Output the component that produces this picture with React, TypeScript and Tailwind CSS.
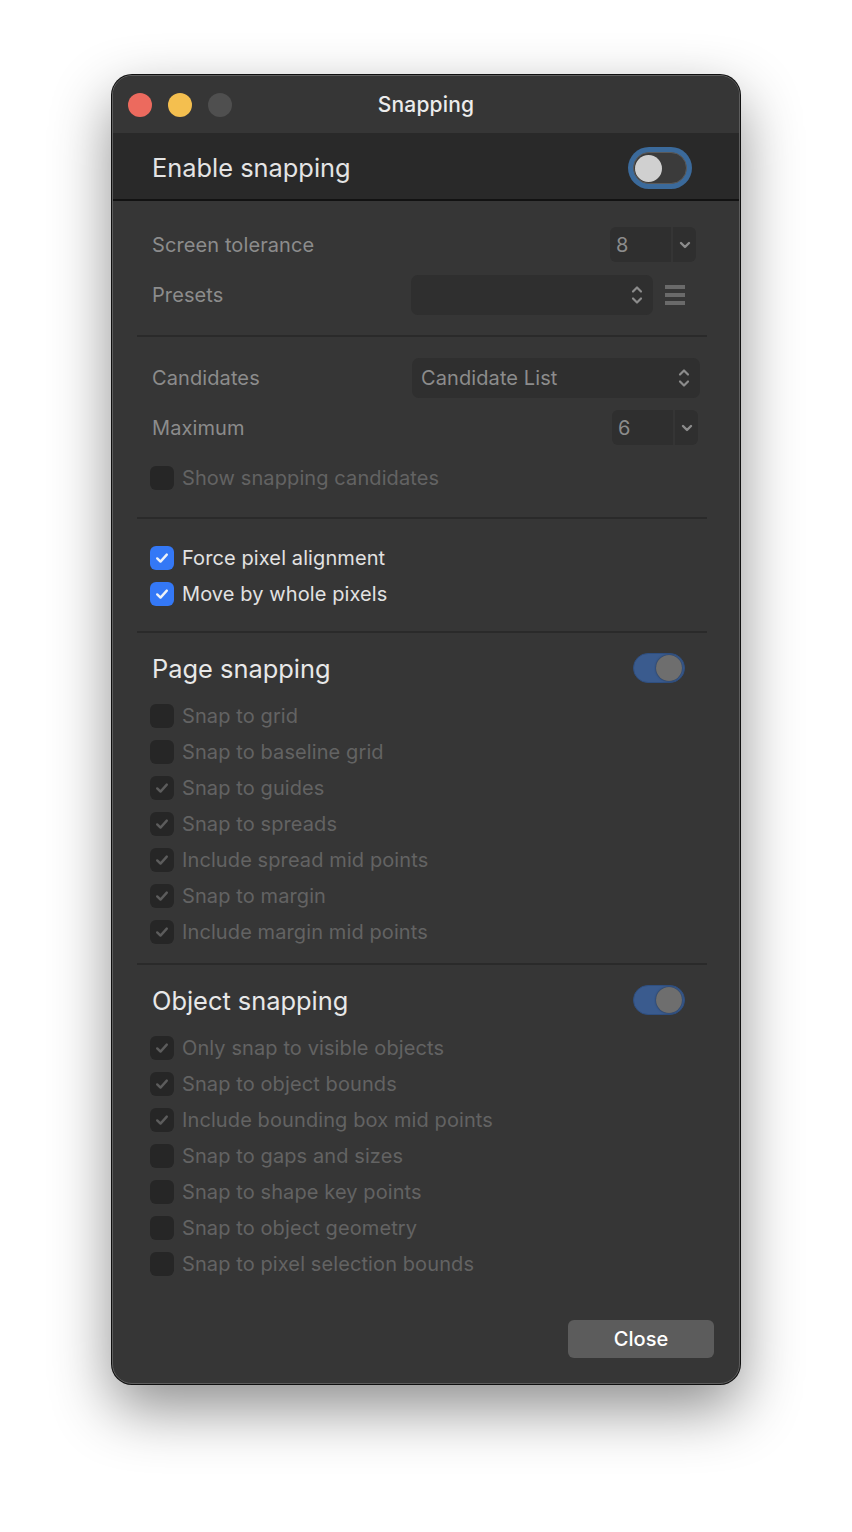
import type { ReactNode } from "react";

const pageRows = [
  { label: "Snap to grid", checked: false },
  { label: "Snap to baseline grid", checked: false },
  { label: "Snap to guides", checked: true },
  { label: "Snap to spreads", checked: true },
  { label: "Include spread mid points", checked: true },
  { label: "Snap to margin", checked: true },
  { label: "Include margin mid points", checked: true },
];

const objectRows = [
  { label: "Only snap to visible objects", checked: true },
  { label: "Snap to object bounds", checked: true },
  { label: "Include bounding box mid points", checked: true },
  { label: "Snap to gaps and sizes", checked: false },
  { label: "Snap to shape key points", checked: false },
  { label: "Snap to object geometry", checked: false },
  { label: "Snap to pixel selection bounds", checked: false },
];

function Check({ color }: { color: string }) {
  return (
    <svg width="16" height="16" viewBox="0 0 16 16" fill="none">
      <path
        d="M3.2 8.4 L6.5 11.6 L12.8 4.6"
        stroke={color}
        strokeWidth="2.4"
        strokeLinecap="round"
        strokeLinejoin="round"
      />
    </svg>
  );
}

function CheckRow({
  label,
  checked,
  active = false,
}: {
  label: string;
  checked: boolean;
  active?: boolean;
}) {
  return (
    <div className="flex h-[36px] items-center gap-[8px] pl-[13px] pt-[2px]">
      <div
        className={
          active
            ? "flex h-[24px] w-[24px] items-center justify-center rounded-[6px] bg-[#3478f6]"
            : "flex h-[24px] w-[24px] items-center justify-center rounded-[6px] bg-[#262626]"
        }
      >
        {checked && <Check color={active ? "#eef2f8" : "#5c5c5c"} />}
      </div>
      <span
        className={
          active
            ? "text-[20px] tracking-[0.1px] text-[#e2e2e2]"
            : "text-[20px] tracking-[0.1px] text-[#636363]"
        }
      >
        {label}
      </span>
    </div>
  );
}

function ChevronDown() {
  return (
    <svg width="12" height="8" viewBox="0 0 12 8" fill="none">
      <path
        d="M2 2 L6 6 L10 2"
        stroke="#8c8c8c"
        strokeWidth="2.4"
        strokeLinecap="round"
        strokeLinejoin="round"
      />
    </svg>
  );
}

function UpDown() {
  return (
    <svg width="12" height="22" viewBox="0 0 12 22" fill="none">
      <path
        d="M2 7.5 L6 3.5 L10 7.5"
        stroke="#8c8c8c"
        strokeWidth="2.2"
        strokeLinecap="round"
        strokeLinejoin="round"
      />
      <path
        d="M2 14.5 L6 18.5 L10 14.5"
        stroke="#8c8c8c"
        strokeWidth="2.2"
        strokeLinecap="round"
        strokeLinejoin="round"
      />
    </svg>
  );
}

function Spin({ value }: { value: string }) {
  return (
    <div className="flex h-[35px] w-[86px] overflow-hidden rounded-[6px]">
      <div className="flex flex-1 items-center bg-[#2f2f2f] pl-[6px] pt-[1px] text-[20px] text-[#8c8c8c]">
        {value}
      </div>
      <div className="w-[2px] bg-[#353535]" />
      <div className="flex w-[23px] items-center justify-center bg-[#2f2f2f]">
        <ChevronDown />
      </div>
    </div>
  );
}

function Popup({ text, width }: { text?: string; width: string }) {
  return (
    <div
      className={`flex h-[40px] ${width} items-center justify-between rounded-[7px] bg-[#2f2f2f] pl-[9px] pr-[10px]`}
    >
      <span className="pt-[1px] text-[20px] tracking-[0.1px] text-[#8c8c8c]">
        {text}
      </span>
      <UpDown />
    </div>
  );
}

function Row({ label, children }: { label: string; children: ReactNode }) {
  return (
    <div className="flex h-[50px] items-center justify-between pl-[15px]">
      <span className="pt-[2px] text-[20px] tracking-[0.1px] text-[#8c8c8c]">
        {label}
      </span>
      <div className="pt-[1px]">{children}</div>
    </div>
  );
}

function Toggle() {
  return (
    <div className="flex h-[30px] w-[52px] items-center justify-end rounded-full border border-[#2f4f80] bg-[#3a5b8e] p-[2px]">
      <div className="h-[26px] w-[26px] rounded-full bg-[#6e6e6e] shadow-[0_0_2px_rgba(0,0,0,0.5)]" />
    </div>
  );
}

function Divider() {
  return <div className="h-[2px] bg-[#2a2a2a]" />;
}

export default function App() {
  return (
    <div
      className="min-h-screen bg-white pt-[75px]"
      style={{ fontFamily: "Inter, 'Noto Sans', sans-serif" }}
    >
      <div className="mx-auto flex h-[1309px] w-[628px] flex-col overflow-hidden rounded-[20px] border border-[#5e5e5e] bg-[#363636] shadow-[0_0_0_1px_#101010,0_24px_60px_rgba(0,0,0,0.45)]">
        {/* title bar */}
        <div className="grid h-[57px] shrink-0 grid-cols-[1fr_auto_1fr] items-center bg-[#363636] px-[15px]">
          <div className="flex gap-[16px]">
            <div className="h-[24px] w-[24px] rounded-full bg-[#ec6a5e]" />
            <div className="h-[24px] w-[24px] rounded-full bg-[#f4bf4f]" />
            <div className="h-[24px] w-[24px] rounded-full bg-[#4f4f4f]" />
          </div>
          <div className="text-[21px] font-medium tracking-[0.2px] text-[#ececec]">
            Snapping
          </div>
          <div />
        </div>

        {/* enable header */}
        <div className="flex h-[68px] shrink-0 items-center justify-between border-b-2 border-[#121212] bg-[#292929] pl-[39px] pr-[47px] pt-[4px]">
          <span className="text-[25.4px] text-[#e4e4e4]">Enable snapping</span>
          <div className="flex h-[42px] w-[64px] items-center rounded-full bg-[#3b6a9b] p-[5px]">
            <div className="flex h-[32px] w-full items-center rounded-full border border-[#5a5a5a] bg-[#3b3b3b] pl-[1px]">
              <div className="h-[27px] w-[27px] rounded-full bg-[#d0d0d0]" />
            </div>
          </div>
        </div>

        <div className="flex flex-1 flex-col pl-[24px] pr-[32px]">
          {/* tolerance & presets */}
          <div className="pb-[16px] pt-[18px]">
            <Row label="Screen tolerance">
              <div className="mr-[11px]">
                <Spin value="8" />
              </div>
            </Row>
            <Row label="Presets">
              <div className="flex items-center gap-[12px]">
                <Popup width="w-[242px]" />
                <div className="mr-[22px] flex w-[20px] flex-col gap-[4px]">
                  <div className="h-[4px] bg-[#6a6a6a]" />
                  <div className="h-[4px] bg-[#6a6a6a]" />
                  <div className="h-[4px] bg-[#6a6a6a]" />
                </div>
              </div>
            </Row>
          </div>
          <Divider />

          {/* candidates */}
          <div className="pb-[22px] pt-[15px]">
            <Row label="Candidates">
              <div className="mr-[7px]">
                <Popup text="Candidate List" width="w-[288px]" />
              </div>
            </Row>
            <Row label="Maximum">
              <div className="mr-[9px]">
                <Spin value="6" />
              </div>
            </Row>
            <div className="pt-[7px]">
              <CheckRow label="Show snapping candidates" checked={false} />
            </div>
          </div>
          <Divider />

          {/* pixel alignment */}
          <div className="pb-[20px] pt-[20px]">
            <CheckRow label="Force pixel alignment" checked active />
            <CheckRow label="Move by whole pixels" checked active />
          </div>
          <Divider />

          {/* page snapping */}
          <div className="pb-[14px] pt-[10px]">
            <div className="flex h-[50px] items-center justify-between pl-[15px] pr-[22px]">
              <span className="pt-[2px] text-[25.4px] text-[#e8e8e8]">
                Page snapping
              </span>
              <Toggle />
            </div>
            <div className="pt-[4px]">
              {pageRows.map((r) => (
                <CheckRow key={r.label} label={r.label} checked={r.checked} />
              ))}
            </div>
          </div>
          <Divider />

          {/* object snapping */}
          <div className="pt-[10px]">
            <div className="flex h-[50px] items-center justify-between pl-[15px] pr-[22px]">
              <span className="pt-[2px] text-[25.4px] text-[#e8e8e8]">
                Object snapping
              </span>
              <Toggle />
            </div>
            <div className="pt-[4px]">
              {objectRows.map((r) => (
                <CheckRow key={r.label} label={r.label} checked={r.checked} />
              ))}
            </div>
          </div>

          <div className="mt-auto flex justify-end pb-[25px]">
            <button className="mr-[-7px] h-[38px] w-[146px] rounded-[6px] bg-[#5c5c5c] text-[20px] font-medium text-white">
              Close
            </button>
          </div>
        </div>
      </div>
    </div>
  );
}
